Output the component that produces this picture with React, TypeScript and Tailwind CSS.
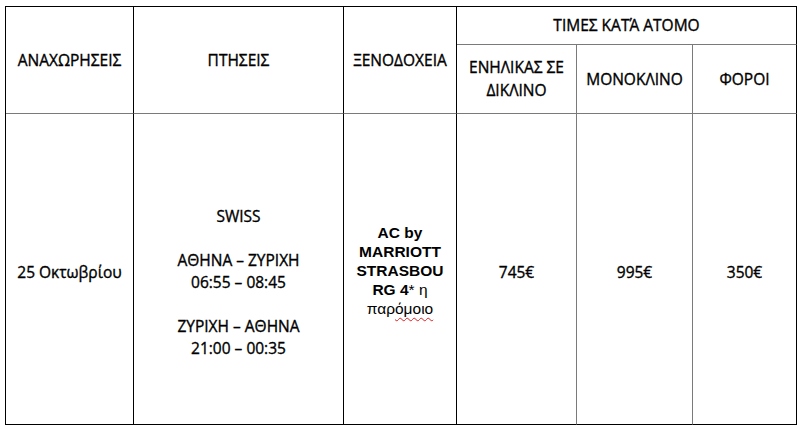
import React from "react";

const hdr = "font-['Open_Sans','Noto_Sans',sans-serif] [-webkit-text-stroke:0.35px_#000] text-[15.5px] text-black leading-[23px]";
const body = "font-['Open_Sans','Noto_Sans',sans-serif] [-webkit-text-stroke:0.35px_#000] text-[15.5px] text-black leading-[22px]";

export default function App() {
  return (
    <div className="w-[800px] h-[429px] bg-white pt-[6px] pl-[5px]">
      <div className="grid w-[792px] grid-cols-[128px_210px_113px_120px_116px_104px] grid-rows-[38px_69px_311px] border-l border-t border-black">
        <div className={`row-span-2 flex items-center justify-center border-r border-b border-r-black border-b-[#7a7a7a] ${hdr}`}>
          ΑΝΑΧΩΡΗΣΕΙΣ
        </div>
        <div className={`row-span-2 flex items-center justify-center border-r border-b border-r-black border-b-[#7a7a7a] ${hdr}`}>
          ΠΤΗΣΕΙΣ
        </div>
        <div className={`row-span-2 flex items-center justify-center border-r border-b border-r-black border-b-[#7a7a7a] ${hdr}`}>
          ΞΕΝΟΔΟΧΕΙΑ
        </div>
        <div className={`col-span-3 flex items-center justify-center border-r border-b border-r-black border-b-[#7a7a7a] ${hdr}`}>
          ΤΙΜΕΣ ΚΑΤΆ ΑΤΟΜΟ
        </div>
        <div className={`flex flex-col items-center justify-center border-r border-b border-r-[#7a7a7a] border-b-[#7a7a7a] text-center ${hdr}`}>
          <span>ΕΝΗΛΙΚΑΣ ΣΕ</span>
          <span>ΔΙΚΛΙΝΟ</span>
        </div>
        <div className={`flex items-center justify-center border-r border-b border-r-[#7a7a7a] border-b-[#7a7a7a] ${hdr}`}>
          ΜΟΝΟΚΛΙΝΟ
        </div>
        <div className={`flex items-center justify-center border-r border-b border-r-black border-b-[#7a7a7a] ${hdr}`}>
          ΦΟΡΟΙ
        </div>

        <div className={`flex items-center justify-center pt-[5px] border-r border-b border-black ${body}`}>
          25 Οκτωβρίου
        </div>
        <div className={`flex flex-col items-center justify-center pt-[26px] border-r border-b border-black text-center ${body}`}>
          <span>SWISS</span>
          <span>&nbsp;</span>
          <span>ΑΘΗΝΑ – ΖΥΡΙΧΗ</span>
          <span>06:55 – 08:45</span>
          <span>&nbsp;</span>
          <span>ΖΥΡΙΧΗ – ΑΘΗΝΑ</span>
          <span>21:00 – 00:35</span>
        </div>
        <div className="flex flex-col items-center justify-center pt-[3px] border-r border-b border-black text-center font-['Liberation_Sans',Arial,sans-serif] text-[15.5px] leading-[19px] text-black">
          <span className="font-bold">AC by</span>
          <span className="font-bold">MARRIOTT</span>
          <span className="font-bold">STRASBOU</span>
          <span>
            <span className="font-bold">RG 4</span>* η
          </span>
          <span>
            παρ<span className="underline decoration-wavy decoration-[#e02020] decoration-1 underline-offset-[3px]">όμοιο</span>
          </span>
        </div>
        <div className={`flex items-center justify-center pt-[5px] border-r border-b border-r-[#7a7a7a] border-b-black ${body}`}>
          745€
        </div>
        <div className={`flex items-center justify-center pt-[5px] border-r border-b border-r-[#7a7a7a] border-b-black ${body}`}>
          995€
        </div>
        <div className={`flex items-center justify-center pt-[5px] border-r border-b border-black ${body}`}>
          350€
        </div>
      </div>
    </div>
  );
}
